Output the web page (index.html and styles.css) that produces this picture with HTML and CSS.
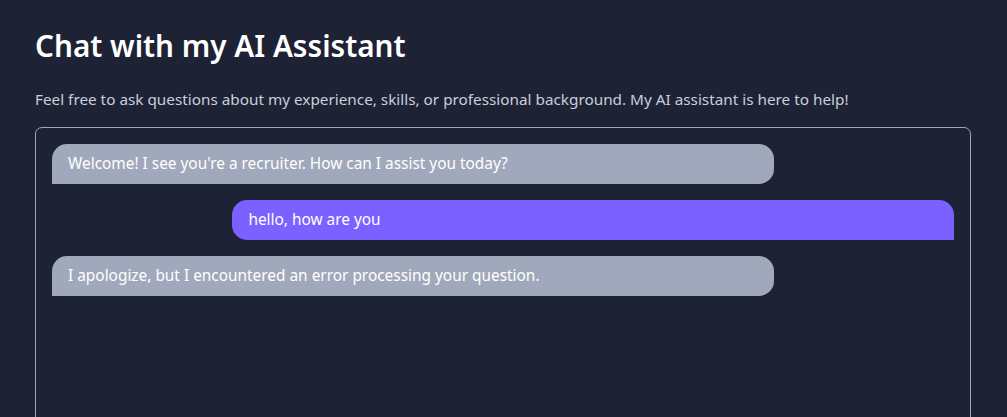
FILE: index.html
```html
<!DOCTYPE html>
<html lang="en">
<head>
<meta charset="utf-8">
<title>Chat with my AI Assistant</title>
<link rel="stylesheet" href="styles.css">
</head>
<body>
<main class="page">
  <h1 class="title">Chat with my AI Assistant</h1>
  <p class="intro">Feel free to ask questions about my experience, skills, or professional background. My AI assistant is here to help!</p>
  <section class="chat">
    <div class="msg bot">Welcome! I see you're a recruiter. How can I assist you today?</div>
    <div class="msg user">hello, how are you</div>
    <div class="msg bot">I apologize, but I encountered an error processing your question.</div>
  </section>
</main>
</body>
</html>
```

FILE: styles.css
```css
html, body {
  margin: 0;
  padding: 0;
  background: #1e2235;
  height: 100%;
  overflow: hidden;
}
body {
  font-family: "Noto Sans", "Open Sans", sans-serif;
  color: #ffffff;
}
.page {
  padding: 26px 36px 0 35px;
  display: flex;
  flex-direction: column;
}
.title {
  margin: 0;
  font-size: 29.7px;
  line-height: 40px;
  font-weight: 600;
  color: #ffffff;
}
.intro {
  margin: 21px 0 0;
  font-size: 15.3px;
  line-height: 24px;
  color: #c9cfdb;
}
.chat {
  margin-top: 16px;
  border: 1px solid #a0a8bb;
  border-radius: 7px;
  padding: 16px;
  height: 380px;
  display: flex;
  flex-direction: column;
  gap: 16px;
}
.msg {
  width: 80%;
  box-sizing: border-box;
  padding: 8px 16px;
  font-size: 15.4px;
  line-height: 24px;
  color: #ffffff;
}
.bot {
  align-self: flex-start;
  background: #a0a8bb;
  border-radius: 15px 15px 15px 0;
}
.user {
  align-self: flex-end;
  background: #7b61ff;
  border-radius: 15px 15px 0 15px;
}
```
